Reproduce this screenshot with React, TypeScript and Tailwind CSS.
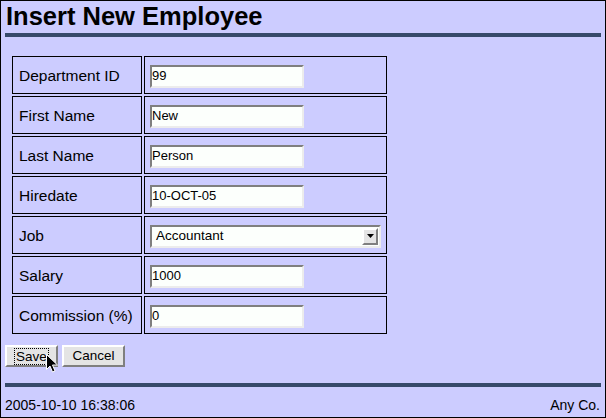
import React from 'react';

const fields: { label: string; value: string; kind?: 'select' }[] = [
  { label: 'Department ID', value: '99' },
  { label: 'First Name', value: 'New' },
  { label: 'Last Name', value: 'Person' },
  { label: 'Hiredate', value: '10-OCT-05' },
  { label: 'Job', value: 'Accountant', kind: 'select' },
  { label: 'Salary', value: '1000' },
  { label: 'Commission (%)', value: '0' },
];

const inset =
  'border-2 border-t-[#7f7f7f] border-l-[#7f7f7f] border-b-[#ececec] border-r-[#ececec] bg-[#fcfffc]';

const outset =
  'border-2 border-t-[#ffffff] border-l-[#ffffff] border-b-[#7f7f7f] border-r-[#7f7f7f] bg-[#e4e4e4]';

const Cursor: React.FC = () => (
  <svg className="absolute left-[41px] top-[9px]" width="12" height="19" viewBox="0 0 12 19">
    <path d="M0.5 0.5 L0.5 15.5 L4 12 L6.5 18 L9 17 L6.5 11 L11.5 11 Z" fill="#000" stroke="#fff" strokeWidth="1" />
  </svg>
);

const App: React.FC = () => {
  return (
    <div
      className="w-[606px] h-[418px] border border-black bg-[#ccccff] px-[4px] pt-[1px] text-black overflow-hidden"
      style={{ fontFamily: '"Liberation Sans", Arial, sans-serif' }}
    >
      <h1 className="text-[25.5px] leading-[28px] font-bold pl-[1px]">Insert New Employee</h1>
      <div className="mt-[3px] h-[4px] bg-[#36496a]" />

      <table className="mt-[17px] ml-[5px] border-separate border-spacing-[2px]">
        <tbody>
          {fields.map((f) => (
            <tr key={f.label}>
              <td className="border border-black w-[130px] h-[38px] pl-[6px] pt-[2px] text-[15.5px] align-middle">
                {f.label}
              </td>
              <td className="border border-black w-[243px] h-[38px] pl-[5px] pt-[2px] align-middle">
                {f.kind === 'select' ? (
                  <div className={`${inset} w-[231px] h-[23px] flex items-center justify-between`}>
                    <span className="pl-[4px] text-[13.5px]">{f.value}</span>
                    <span className={`${outset} w-[16px] h-[17px] mr-[1px] flex items-center justify-center`}>
                      <svg width="7" height="4" viewBox="0 0 7 4">
                        <path d="M0 0 H7 L3.5 4 Z" fill="#000" />
                      </svg>
                    </span>
                  </div>
                ) : (
                  <div className={`${inset} w-[154px] h-[23px] flex items-center text-[13px]`}>
                    {f.value}
                  </div>
                )}
              </td>
            </tr>
          ))}
        </tbody>
      </table>

      <div className="mt-[9px] flex gap-[4px] relative text-[13.5px]">
        <button className={`${outset} w-[53px] h-[22px] flex items-center justify-center`}>
          <span className="border border-dotted border-black px-[1px] leading-[15px]">Save</span>
        </button>
        <button className={`${outset} w-[63px] h-[22px] flex items-center justify-center`}>
          Cancel
        </button>
        <Cursor />
      </div>

      <div className="mt-[16px] h-[4px] bg-[#36496a]" />
      <div className="mt-[10px] flex justify-between text-[14px] leading-[16px] pr-[1px]">
        <span>2005-10-10 16:38:06</span>
        <span>Any Co.</span>
      </div>
    </div>
  );
};

export default App;
